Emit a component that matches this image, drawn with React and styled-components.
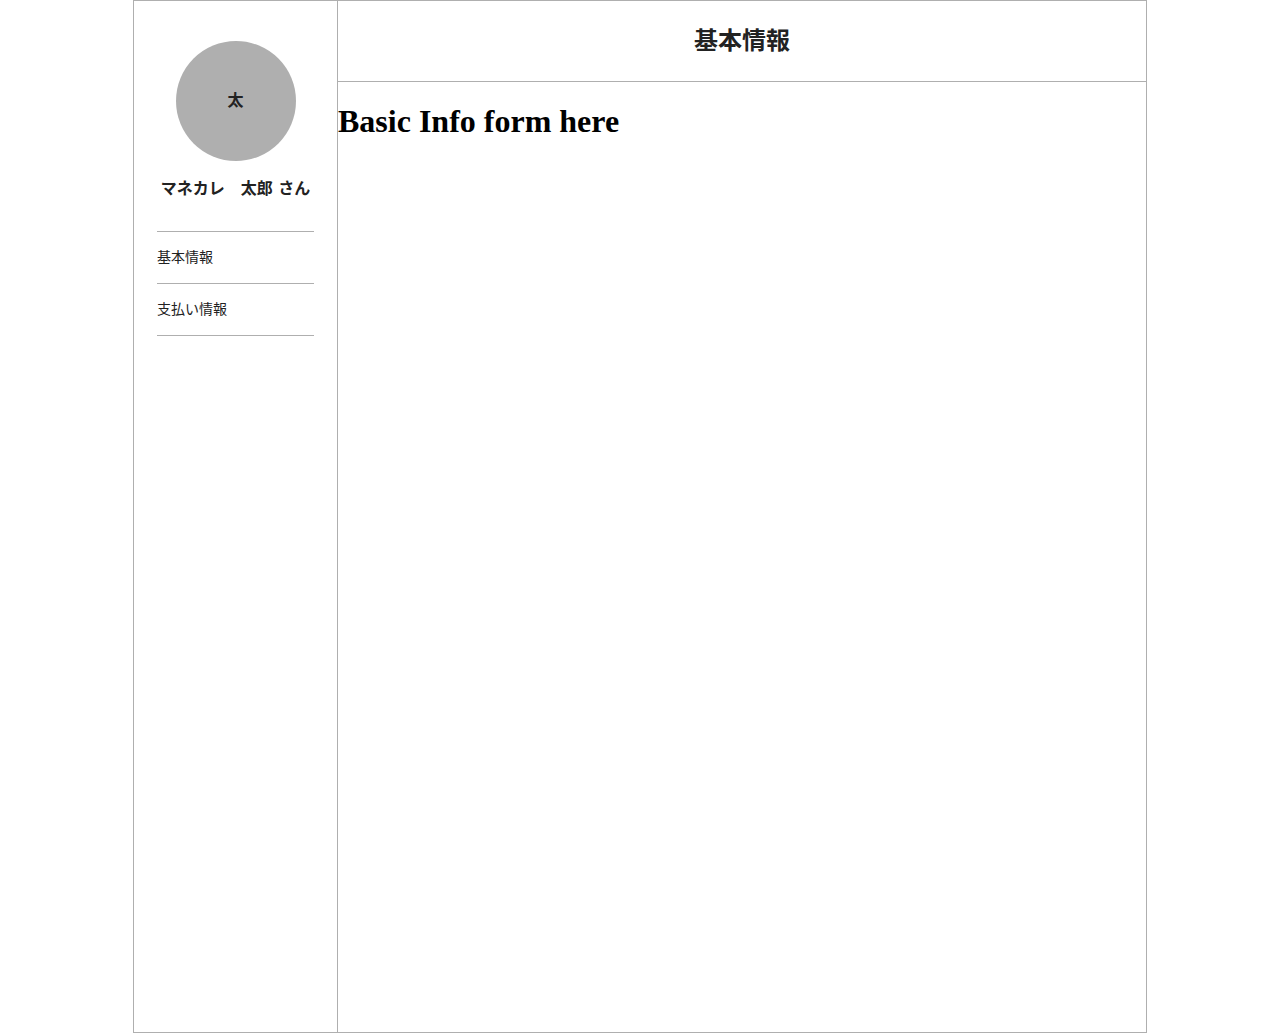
import React from "react";
import styled, { createGlobalStyle } from "styled-components";

const line = "#afafaf";
const ink = "#222222";

const GlobalStyle = createGlobalStyle`
  *, *::before, *::after { box-sizing: border-box; }
  body { margin: 0; background: #fff; }
`;

const Layout = styled.div`
  display: grid;
  grid-template-columns: 204px minmax(0, 1fr);
  width: 100%;
  max-width: 1014px;
  min-height: 100vh;
  margin: 0 auto;
  border: 1px solid ${line};
  color: ${ink};
  font-family: "DejaVu Sans", "Noto Sans CJK JP", sans-serif;
`;

const Sidebar = styled.aside`
  display: flex;
  flex-direction: column;
  align-items: center;
  padding: 40px 23px;
  border-right: 1px solid ${line};
`;

const Avatar = styled.div`
  display: flex;
  align-items: center;
  justify-content: center;
  width: 120px;
  height: 120px;
  border-radius: 50%;
  background: ${line};
  font-size: 16px;
  font-weight: 700;
  line-height: 24px;
`;

const UserName = styled.p`
  margin: 16px 0 30px;
  font-size: 16px;
  font-weight: 700;
  line-height: 24px;
  white-space: nowrap;
`;

const Menu = styled.ul`
  align-self: stretch;
  margin: 0;
  padding: 0;
  border-top: 1px solid ${line};
  list-style: none;
`;

const MenuItem = styled.li`
  border-bottom: 1px solid ${line};
`;

const MenuLink = styled.a`
  display: block;
  padding: 15px 0;
  color: inherit;
  font-size: 14px;
  line-height: 21px;
  text-decoration: none;
`;

const Main = styled.main`
  min-width: 0;
`;

const Header = styled.header`
  display: flex;
  align-items: center;
  justify-content: center;
  height: 81px;
  border-bottom: 1px solid ${line};
`;

const Title = styled.h1`
  margin: 0;
  font-size: 24px;
  font-weight: 700;
  line-height: 36px;
`;

const FormHeading = styled.h2`
  margin: 21px 0;
  color: #000;
  font-family: "Liberation Serif", serif;
  font-size: 32px;
  font-weight: 700;
  line-height: 37px;
`;

const links = [
  { href: "#basic", label: "基本情報" },
  { href: "#payment", label: "支払い情報" },
];

export default function App() {
  return (
    <>
      <GlobalStyle />
      <Layout>
        <Sidebar>
          <Avatar>太</Avatar>
          <UserName>マネカレ　太郎 さん</UserName>
          <Menu>
            {links.map(({ href, label }) => (
              <MenuItem key={href}>
                <MenuLink href={href}>{label}</MenuLink>
              </MenuItem>
            ))}
          </Menu>
        </Sidebar>
        <Main>
          <Header>
            <Title>基本情報</Title>
          </Header>
          <FormHeading>Basic Info form here</FormHeading>
        </Main>
      </Layout>
    </>
  );
}
